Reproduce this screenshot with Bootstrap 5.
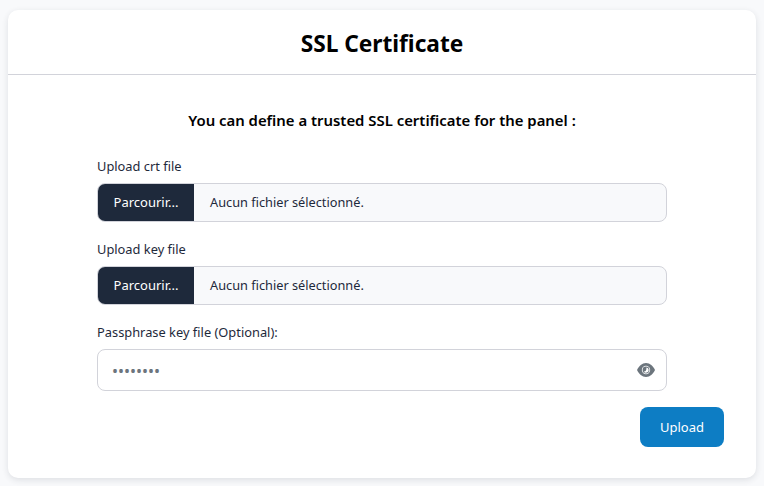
<!DOCTYPE html>
<html lang="fr">
<head>
<meta charset="utf-8">
<title>SSL Certificate</title>
<link href="https://cdn.jsdelivr.net/npm/bootstrap@5.3.0/dist/css/bootstrap.min.css" rel="stylesheet">
<style>
html, body { height: 486px; overflow: hidden; }
body { background: #f8f9fb; font-family: "Noto Sans", "Open Sans", sans-serif; font-size: 13px; color: #1e293b; padding: 10px 8px 8px; }
.ssl-card { height: 468px; border: 0; border-radius: 10px; background: #fff; box-shadow: 0 2px 6px rgba(30,41,59,.12); }
.ssl-head { height: 65px; border-bottom: 1px solid #d2d3da; padding-top: 4px; }
.ssl-head h1 { font-size: 22.7px; font-weight: 700; color: #000; margin: 0; }
.ssl-intro { font-size: 14.9px; font-weight: 600; color: #000; margin: 34px 0 0; height: 22px; line-height: 22px; }
.ssl-form { width: 570px; margin: 26px 0 0 89px; }
.ssl-label { display: block; font-size: 12.85px; line-height: 18px; margin: 0 0 8px; color: #1e293b; }
.ssl-file { height: 39px; border: 1px solid #d2d3da; border-radius: 8px; background: #f8f9fb; overflow: hidden; margin-bottom: 18px; font-size: 12.75px; }
.ssl-browse { width: 96px; background: #1e293b; color: #fff; font-size: 13px; }
.ssl-none { padding-left: 16px; color: #1e293b; }
.ssl-pass { height: 42px; border: 1px solid #d2d3da; border-radius: 8px; padding: 2px 44px 0 14px; font-size: 16px; color: #6c757d; }
.ssl-pass:focus { box-shadow: none; border-color: #d2d3da; color: #6c757d; }
.ssl-eye { top: 13px; right: 12px; }
.ssl-upload { width: 84px; height: 40px; background: #0d7dc4; color: #fff; border: 0; border-radius: 8px; font-size: 13px; margin: 16px 32px 0 0; padding-top: 8px; }
.ssl-upload:hover { background: #0d7dc4; color: #fff; }
</style>
</head>
<body>
<div class="card ssl-card">
  <div class="ssl-head d-flex align-items-center justify-content-center"><h1>SSL Certificate</h1></div>
  <p class="ssl-intro text-center">You can define a trusted SSL certificate for the panel :</p>
  <div class="ssl-form">
    <label class="ssl-label">Upload crt file</label>
    <div class="ssl-file d-flex">
      <div class="ssl-browse d-flex align-items-center justify-content-center">Parcourir...</div>
      <div class="ssl-none d-flex align-items-center">Aucun fichier sélectionné.</div>
    </div>
    <label class="ssl-label">Upload key file</label>
    <div class="ssl-file d-flex">
      <div class="ssl-browse d-flex align-items-center justify-content-center">Parcourir...</div>
      <div class="ssl-none d-flex align-items-center">Aucun fichier sélectionné.</div>
    </div>
    <label class="ssl-label">Passphrase key file (Optional):</label>
    <div class="position-relative">
      <input type="password" class="form-control ssl-pass" value="12345678">
      <svg class="ssl-eye position-absolute" width="18" height="16" viewBox="0 0 18 16"><path fill="#6c757d" d="M9 1c4 0 7 3 9 7-2 4-5 7-9 7s-7-3-9-7c2-4 5-7 9-7z"/><circle cx="9" cy="8" r="4.2" fill="#fff"/><circle cx="9" cy="8" r="3.4" fill="#6c757d"/><path fill="#fff" d="M9.4 5.4a2.7 2.7 0 0 1 2.3 2.6 2.7 2.7 0 0 1-5 1.4c1.8.3 3-1 2.7-4z"/></svg>
    </div>
  </div>
  <div class="d-flex justify-content-end"><button type="button" class="btn ssl-upload">Upload</button></div>
</div>
</body>
</html>
